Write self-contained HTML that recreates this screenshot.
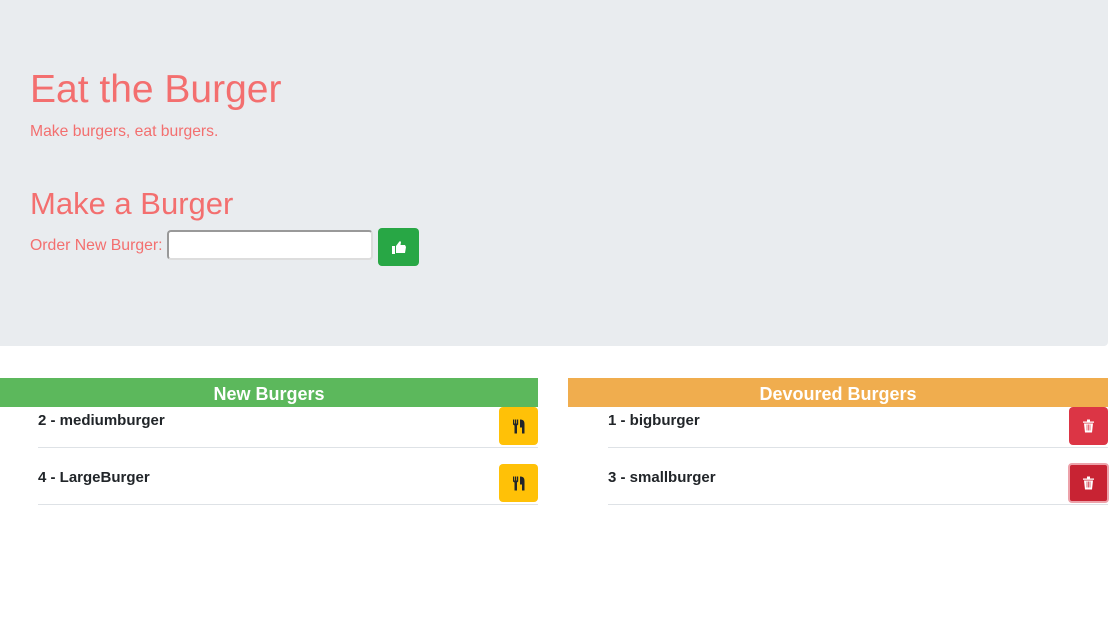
<!DOCTYPE html>
<html><head><style>
body{margin:0;background:#fff;font-family:"Liberation Sans",sans-serif;width:1112px;height:619px;overflow:hidden;position:relative}
.j{position:absolute;left:0;top:0;width:1108px;height:346px;background:#e9ecef;border-radius:0 0 4px 0}
.t{position:absolute;color:#f36f6f;white-space:nowrap}
.bar{position:absolute;top:378px;height:29px;color:#fff;font-weight:bold;font-size:18px;text-align:center;line-height:33px}
.name{position:absolute;font-weight:bold;font-size:15px;color:#212529}
.line{position:absolute;height:1px;background:#dee2e6}
.btn{position:absolute;width:39px;height:38px;border-radius:4px;display:flex;align-items:center;justify-content:center}
</style></head><body>
<div class="j"></div>
<div class="t" style="left:30px;top:68px;font-size:39px">Eat the Burger</div>
<div class="t" style="left:30px;top:123px;font-size:15.7px">Make burgers, eat burgers.</div>
<div class="t" style="left:30px;top:186px;font-size:31px">Make a Burger</div>
<div class="t" style="left:30px;top:237px;font-size:15.8px">Order New Burger:</div>
<div style="position:absolute;left:167px;top:230px;width:202px;height:26px;background:#fff;border:2px solid #999;border-right-color:#ddd;border-bottom-color:#ddd;border-radius:4px"></div>
<div class="btn" style="left:378px;top:228px;width:41px;background:#28a745"><svg width="14" height="13" viewBox="0 0 14 13"><rect x="0" y="5" width="3" height="8" fill="#fff"/><path d="M4 5 L7 1 L8 0 L9 1 L8.5 4 L13 4 L14 6 L13 12 L4 12Z" fill="#fff"/></svg></div>
<div class="bar" style="left:0;width:538px;background:#5cb85c">New Burgers</div>
<div class="bar" style="left:568px;width:540px;background:#f0ad4e">Devoured Burgers</div>
<div class="name" style="left:38px;top:412px">2 - mediumburger</div>
<div class="line" style="left:38px;top:447px;width:500px"></div>
<div class="name" style="left:38px;top:469px">4 - LargeBurger</div>
<div class="line" style="left:38px;top:504px;width:500px"></div>
<div class="btn" style="left:499px;top:407px;background:#ffc107"><svg width="12" height="15" viewBox="0 0 12 14"><path d="M0 0h1.3v4h.7V0h1.2v4h.7V0h1.3v5L4 6v8H1.5V6L0 5Z M7 0C11.5 0 11.5 3 11.5 5v9H9V8H7Z" fill="#212529"/></svg></div>
<div class="btn" style="left:499px;top:464px;background:#ffc107"><svg width="12" height="15" viewBox="0 0 12 14"><path d="M0 0h1.3v4h.7V0h1.2v4h.7V0h1.3v5L4 6v8H1.5V6L0 5Z M7 0C11.5 0 11.5 3 11.5 5v9H9V8H7Z" fill="#212529"/></svg></div>
<div class="name" style="left:608px;top:412px">1 - bigburger</div>
<div class="line" style="left:608px;top:447px;width:500px"></div>
<div class="name" style="left:608px;top:469px">3 - smallburger</div>
<div class="line" style="left:608px;top:504px;width:500px"></div>
<div class="btn" style="left:1069px;top:407px;background:#dc3545"><svg width="11" height="14" viewBox="0 0 11 13"><path d="M0 2h11v1.3H0Z M4 0h3v2H4Z M1 4h9l-1 9H2Z" fill="#fff"/><path d="M4 5v6M5.5 5v6M7 5v6" stroke="#dc3545" stroke-width=".7"/></svg></div>
<div class="btn" style="left:1068px;top:463px;background:#c82333;border:2px solid #eda2aa;width:37px;height:36px"><svg width="11" height="14" viewBox="0 0 11 13"><path d="M0 2h11v1.3H0Z M4 0h3v2H4Z M1 4h9l-1 9H2Z" fill="#fff"/><path d="M4 5v6M5.5 5v6M7 5v6" stroke="#c82333" stroke-width=".7"/></svg></div>
</body></html>
